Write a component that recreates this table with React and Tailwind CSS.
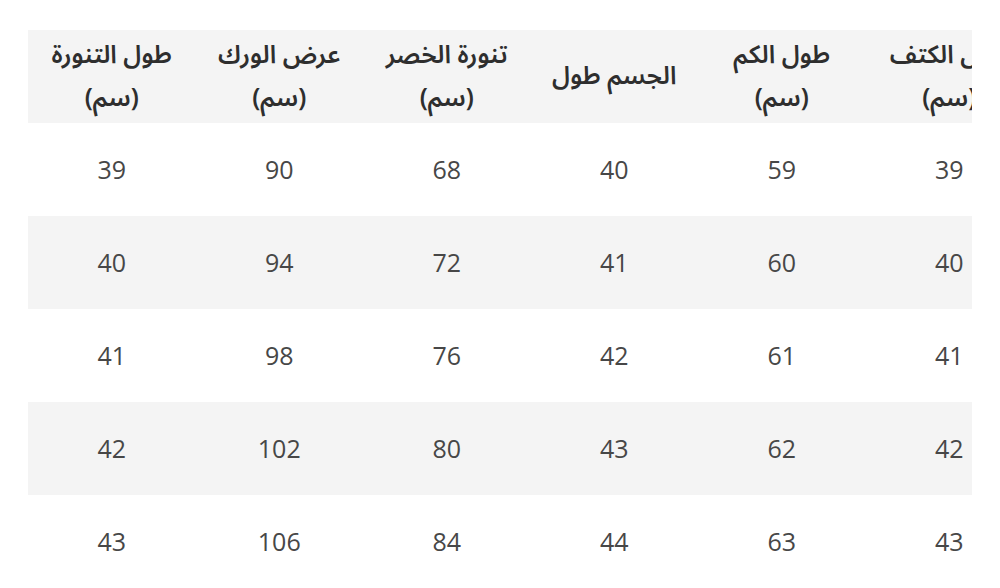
const HEADERS = [
  ['طول الكتف', '(سم)'],
  ['طول الكم', '(سم)'],
  ['الجسم طول'],
  ['تنورة الخصر', '(سم)'],
  ['عرض الورك', '(سم)'],
  ['طول التنورة', '(سم)'],
]

const ROWS = [
  [39, 59, 40, 68, 90, 39],
  [40, 60, 41, 72, 94, 40],
  [41, 61, 42, 76, 98, 41],
  [42, 62, 43, 80, 102, 42],
  [43, 63, 44, 84, 106, 43],
]

export default function App() {
  return (
    <div className="w-[1000px] h-[588px] bg-white overflow-hidden pt-[30px] pl-[28px]">
      <div className="w-[944px] overflow-hidden">
        <div dir="rtl" className="w-[1005px]">
          {/* Header */}
          <div
            className="grid grid-cols-6 h-[93px] bg-[#f4f4f4] text-[#2e2e2e]"
            style={{ fontFamily: '"Noto Sans Arabic", "DejaVu Sans", sans-serif' }}
          >
            {HEADERS.map((h, i) => (
              <div key={i} className="flex flex-col items-center justify-center text-[25px] font-semibold leading-[43px]">
                {h.map((line, j) => (
                  <span key={j} className="whitespace-nowrap">{line}</span>
                ))}
              </div>
            ))}
          </div>

          {/* Rows */}
          {ROWS.map((row, r) => (
            <div
              key={r}
              className={`grid grid-cols-6 h-[93px] ${r % 2 === 1 ? 'bg-[#f4f4f4]' : 'bg-white'}`}
              style={{ fontFamily: '"Open Sans", "Noto Sans", sans-serif' }}
            >
              {row.map((v, c) => (
                <div key={c} className="flex items-center justify-center text-[25px] text-[#474747]">
                  {v}
                </div>
              ))}
            </div>
          ))}
        </div>
      </div>
    </div>
  )
}
